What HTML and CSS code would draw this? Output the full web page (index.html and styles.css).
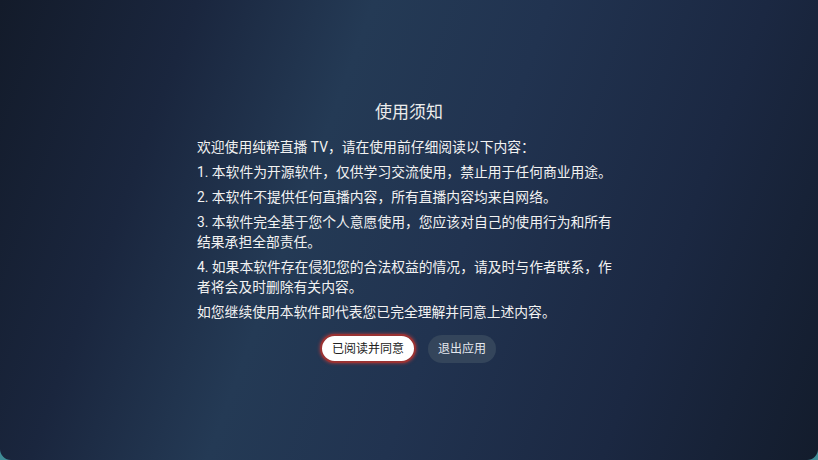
FILE: index.html
```html
<!DOCTYPE html>
<html lang="zh-CN">
<head>
<meta charset="utf-8">
<title>使用须知</title>
<link rel="stylesheet" href="styles.css">
</head>
<body>
<div class="screen">
  <div class="dialog">
    <h1 class="title">使用须知</h1>
    <div class="content">
      <p>欢迎使用纯粹直播 TV，请在使用前仔细阅读以下内容：</p>
      <p>1. 本软件为开源软件，仅供学习交流使用，禁止用于任何商业用途。</p>
      <p>2. 本软件不提供任何直播内容，所有直播内容均来自网络。</p>
      <p>3. 本软件完全基于您个人意愿使用，您应该对自己的使用行为和所有结果承担全部责任。</p>
      <p>4. 如果本软件存在侵犯您的合法权益的情况，请及时与作者联系，作者将会及时删除有关内容。</p>
      <p>如您继续使用本软件即代表您已完全理解并同意上述内容。</p>
    </div>
    <div class="actions">
      <button class="btn btn-primary">已阅读并同意</button>
      <button class="btn btn-secondary">退出应用</button>
    </div>
  </div>
</div>
</body>
</html>
```

FILE: styles.css
```css
html, body {
  margin: 0;
  padding: 0;
  width: 818px;
  height: 460px;
  overflow: hidden;
  background: #3f8c96;
}

.screen {
  width: 818px;
  height: 460px;
  border-radius: 0 0 11px 11px;
  background: linear-gradient(110deg, #131b2a 0%, #1a263e 20%, #243a55 38%, #213350 56%, #1b2842 78%, #131c2c 100%);
  font-family: Roboto, "Noto Sans CJK SC", sans-serif;
  color: #eeeeee;
  display: flex;
  justify-content: center;
}

.dialog {
  width: 424px;
  padding-top: 101px;
  display: flex;
  flex-direction: column;
}

.title {
  margin: 0 0 14px;
  font-size: 17px;
  font-weight: 400;
  line-height: 22px;
  text-align: center;
  color: #ececec;
}

.content p {
  margin: 0 0 5px;
  font-size: 13.8px;
  line-height: 20px;
  color: #f2f2f2;
}

.actions {
  margin-top: 7px;
  display: flex;
  justify-content: center;
  align-items: center;
  gap: 12px;
  padding-right: 2px;
}

.btn {
  font-family: Roboto, "Noto Sans CJK SC", sans-serif;
  font-size: 12px;
  line-height: 16px;
  border-radius: 15px;
  padding: 6px 10px;
  cursor: pointer;
}

.btn-primary {
  background: #ffffff;
  color: #222222;
  border: 2px solid #9a3232;
  box-shadow: 0 0 3px 1px rgba(190, 60, 60, 0.55);
  padding: 4.5px 10px;
}

.btn-secondary {
  background: #34455b;
  color: #e4e8ee;
  border: none;
  padding: 6px 10px;
}
```
